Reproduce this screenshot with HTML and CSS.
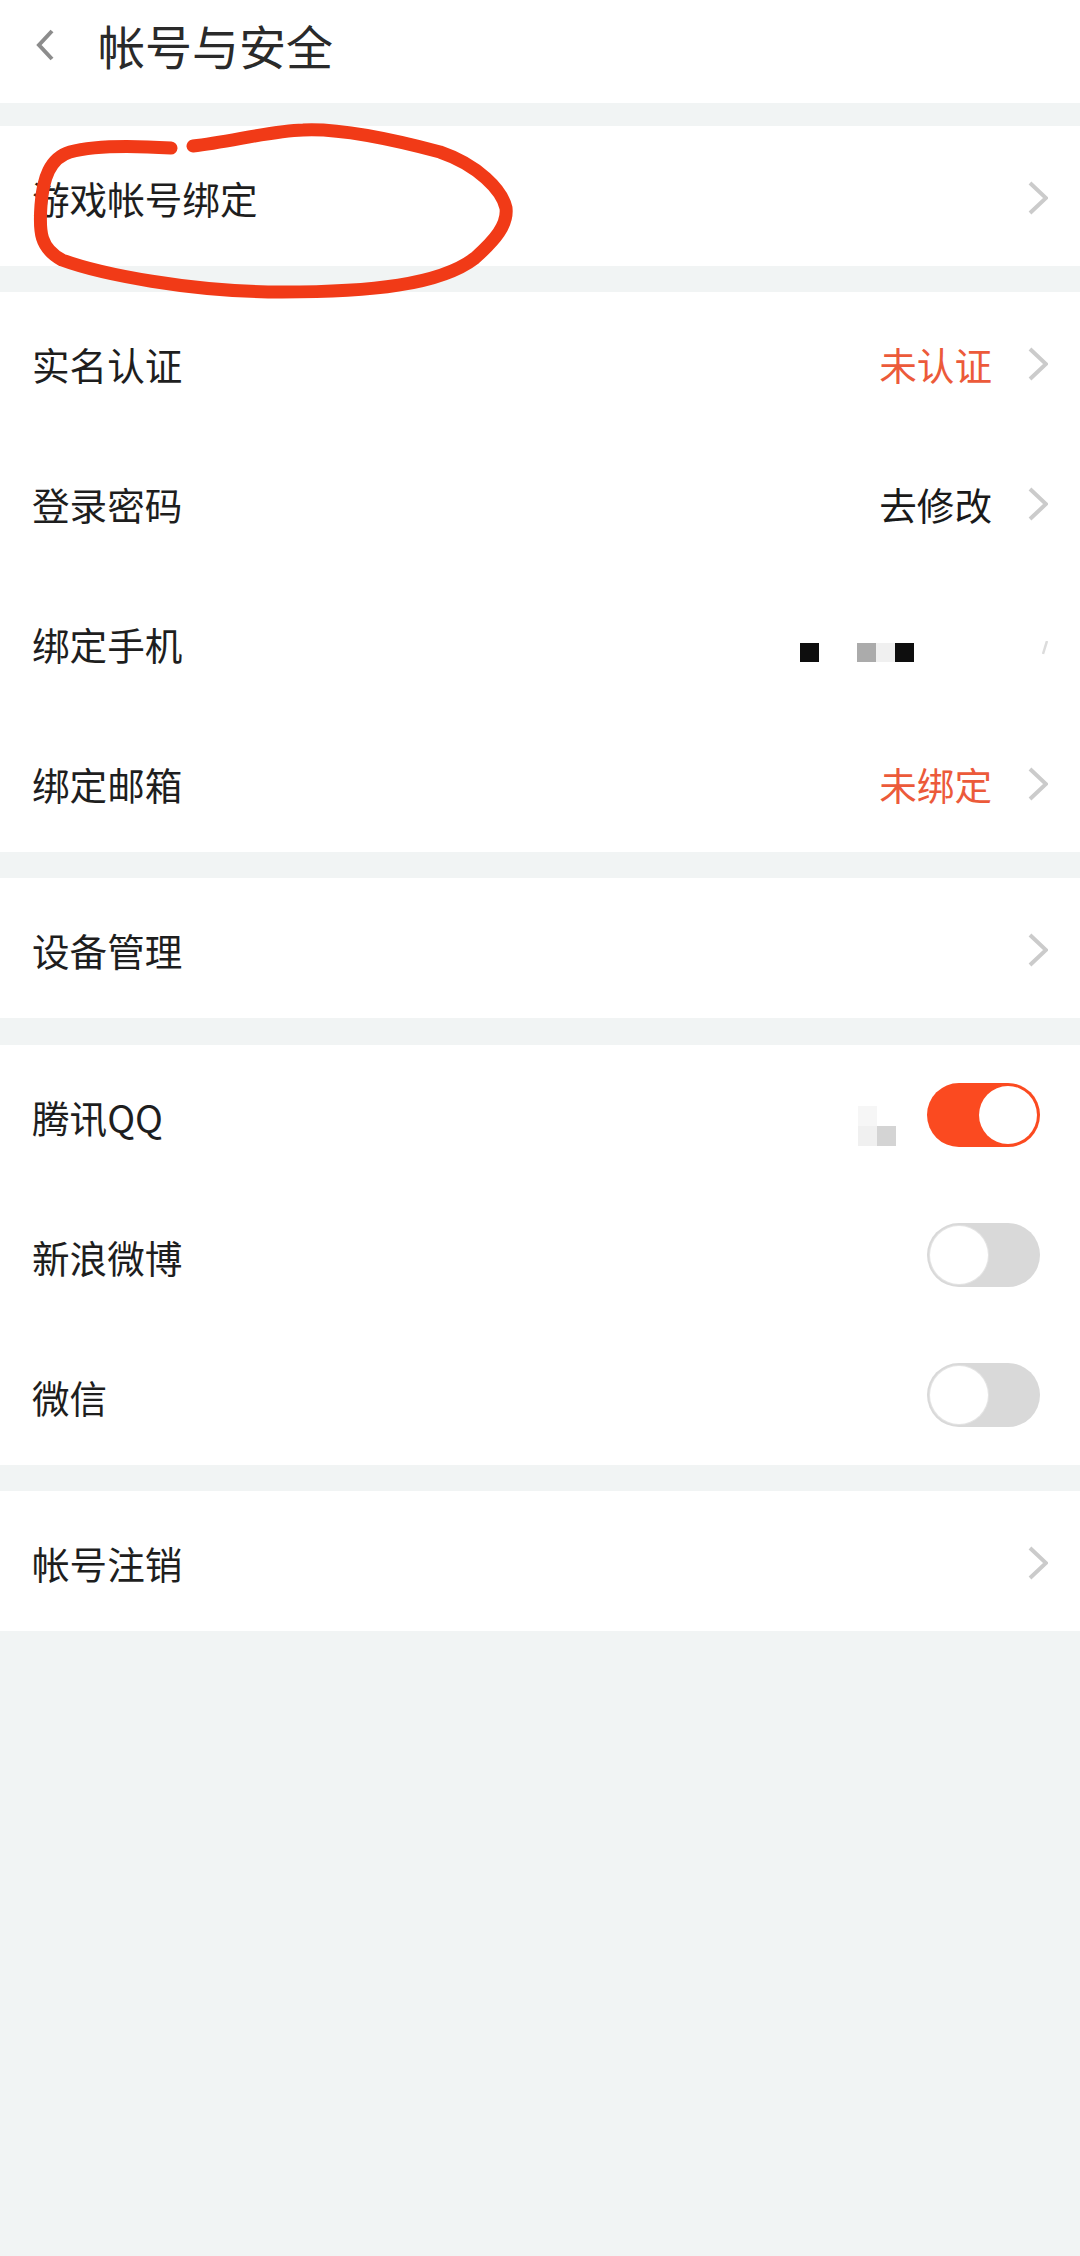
FILE: index.html
```html
<!DOCTYPE html>
<html lang="zh-CN">
<head>
<meta charset="utf-8">
<title>帐号与安全</title>
<link rel="stylesheet" href="styles.css">
</head>
<body>
<div class="page">
  <header class="header">
    <svg class="back" width="18" height="32" viewBox="0 0 18 32"><path d="M16 2 L3 16 L16 30" fill="none" stroke="#8c8c8c" stroke-width="4"/></svg>
    <h1 class="title">帐号与安全</h1>
  </header>

  <section class="card">
    <div class="row"><span class="label">游戏帐号绑定</span>
      <svg class="chev" width="20" height="34" viewBox="0 0 20 34"><path d="M2 2 L18 17 L2 32" fill="none" stroke="#cbcbcb" stroke-width="4"/></svg></div>
  </section>

  <section class="card">
    <div class="row"><span class="label">实名认证</span><span class="value alert">未认证</span>
      <svg class="chev" width="20" height="34" viewBox="0 0 20 34"><path d="M2 2 L18 17 L2 32" fill="none" stroke="#cbcbcb" stroke-width="4"/></svg></div>
    <div class="row"><span class="label">登录密码</span><span class="value">去修改</span>
      <svg class="chev" width="20" height="34" viewBox="0 0 20 34"><path d="M2 2 L18 17 L2 32" fill="none" stroke="#cbcbcb" stroke-width="4"/></svg></div>
    <div class="row"><span class="label">绑定手机</span>
      <div class="mosaic phone">
        <i class="px dark"></i><i class="px blank"></i><i class="px blank"></i><i class="px mid"></i><i class="px pale"></i><i class="px dark"></i>
      </div>
      <svg class="trace" width="6" height="14" viewBox="0 0 6 14"><path d="M5 0 L1 13" fill="none" stroke="#dcdcdc" stroke-width="2.5"/></svg></div>
    <div class="row"><span class="label">绑定邮箱</span><span class="value alert">未绑定</span>
      <svg class="chev" width="20" height="34" viewBox="0 0 20 34"><path d="M2 2 L18 17 L2 32" fill="none" stroke="#cbcbcb" stroke-width="4"/></svg></div>
  </section>

  <section class="card">
    <div class="row"><span class="label">设备管理</span>
      <svg class="chev" width="20" height="34" viewBox="0 0 20 34"><path d="M2 2 L18 17 L2 32" fill="none" stroke="#cbcbcb" stroke-width="4"/></svg></div>
  </section>

  <section class="card card-social">
    <div class="row"><span class="label">腾讯QQ</span>
      <div class="mosaic qq"><i class="px faint"></i><i class="px blank"></i><i class="px pale"></i><i class="px soft"></i></div>
      <div class="switch on"><span class="knob"></span></div></div>
    <div class="row"><span class="label">新浪微博</span><div class="switch"><span class="knob"></span></div></div>
    <div class="row"><span class="label">微信</span><div class="switch"><span class="knob"></span></div></div>
  </section>

  <section class="card">
    <div class="row"><span class="label">帐号注销</span>
      <svg class="chev" width="20" height="34" viewBox="0 0 20 34"><path d="M2 2 L18 17 L2 32" fill="none" stroke="#cbcbcb" stroke-width="4"/></svg></div>
  </section>

  <svg class="scribble" width="540" height="310" viewBox="0 0 540 310">
    <path d="M171 148 C140 146 95 145 70 152 C50 158 43 178 41 205 C39 232 40 248 62 260 C100 274 190 292 282 292 C370 292 440 285 475 258 C495 240 508 225 506 208 C502 190 478 165 440 152 C395 140 340 128 303 130 C270 131 230 142 193 146" fill="none" stroke="#f13a17" stroke-width="13" stroke-linecap="round" stroke-linejoin="round"/>
  </svg>
</div>
</body>
</html>
```

FILE: styles.css
```css
* { box-sizing: border-box; }
html, body { margin: 0; padding: 0; }
body {
  width: 1080px;
  height: 2256px;
  background: #f1f4f4;
  font-family: "Noto Sans CJK SC", "Noto Sans", sans-serif;
  color: #1e1e1e;
  overflow: hidden;
}
.page { position: relative; width: 1080px; height: 2256px; display: flex; flex-direction: column; }
.header {
  height: 103px;
  background: #fff;
  display: flex;
  align-items: center;
  padding: 0 0 14px 36px;
  gap: 44px;
}
.back { flex: none; margin-top: 1px; }
.title { margin: 0; font-size: 47px; line-height: 1; font-weight: 400; color: #2a2a2a; }
.card { background: #fff; margin-top: 26px; }
.header + .card { margin-top: 23px; }
.card-social { margin-top: 27px; }
.row {
  height: 140px;
  display: flex;
  align-items: center;
  padding: 3px 32px 0 32px;
}
.label { flex: 1; font-size: 37.6px; line-height: 1; white-space: nowrap; }
.value { font-size: 37.6px; line-height: 1; margin-right: 36px; color: #1a1a1a; }
.value.alert { color: #ec5a3a; }
.chev { flex: none; margin-top: 1px; }
.trace { flex: none; margin: 9px 0 0 128px; }
.mosaic { display: grid; grid-auto-rows: 19px; }
.phone { grid-template-columns: repeat(6, 19px); margin-top: 17px; }
.qq { grid-template-columns: repeat(2, 19px); grid-auto-rows: 20px; margin: 19px 31px 0 0; }
.px { display: block; }
.px.dark { background: #0e0e0e; }
.px.mid { background: #ababab; }
.px.pale { background: #f0f0f0; }
.px.soft { background: #d4d4d4; }
.px.faint { background: #f6f6f6; }
.px.blank { background: transparent; }
.switch {
  flex: none;
  width: 113px;
  height: 64px;
  border-radius: 32px;
  background: #d9d9d9;
  display: flex;
  align-items: center;
  padding: 0 3px;
  margin: -3px 8px 0 0;
}
.knob { width: 58px; height: 58px; border-radius: 50%; background: #fff; box-shadow: 0 0 0 1px #e4e4e4; }
.switch.on { background: #fb4a20; justify-content: flex-end; }
.switch.on .knob { box-shadow: none; }
.scribble { position: absolute; left: 0; top: 0; pointer-events: none; }
```
